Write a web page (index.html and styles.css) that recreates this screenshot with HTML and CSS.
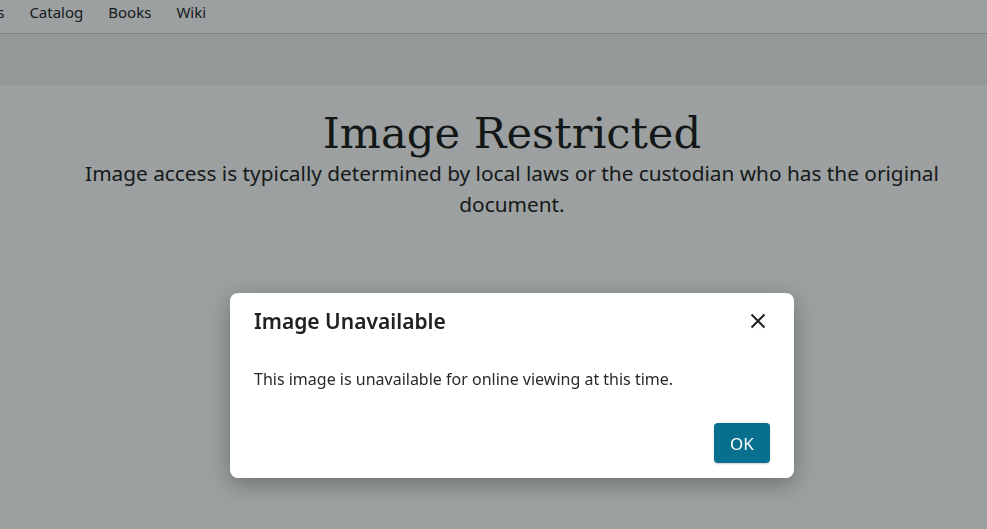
FILE: index.html
```html
<!doctype html>
<html lang="en">
<head>
    <meta charset="UTF-8">
    <meta name="viewport" content="width=device-width, initial-scale=1.0">
    <title>Image Restricted</title>
    <link rel="stylesheet" href="styles.css">
</head>
<body>
<div class="page">
    <div class="topnav">
        <ul>
            <li>Records</li>
            <li>Catalog</li>
            <li>Books</li>
            <li>Wiki</li>
        </ul>
    </div>
    <div class="toolbar"></div>
    <div class="restricted">
        <h1>Image Restricted</h1>
        <p>Image access is typically determined by local laws or the custodian who has the original document.</p>
    </div>
</div>

<!-- 弹窗 -->
<div class="backdrop">
    <div class="modal">
        <div class="modal_head">
            <h2>Image Unavailable</h2>
            <span class="close">
                <svg width="16" height="16" viewBox="0 0 16 16">
                    <path d="M1.5 1.5 L14.5 14.5 M14.5 1.5 L1.5 14.5" stroke="#222" stroke-width="2" fill="none"/>
                </svg>
            </span>
        </div>
        <div class="modal_body">This image is unavailable for online viewing at this time.</div>
        <div class="modal_foot">
            <button class="btn_ok">OK</button>
        </div>
    </div>
</div>
</body>
</html>
```

FILE: styles.css
```css
* {
    margin: 0;
    padding: 0;
    box-sizing: border-box;
}

html, body {
    overflow: hidden;
    height: 100%;
}

body {
    background: #fff;
    font-family: "Noto Sans", "Open Sans", sans-serif;
    color: #212529;
}

.page {
    width: 1024px;
}

.topnav {
    height: 34px;
    border-bottom: 1px solid #cdcdcd;
}

.topnav ul {
    list-style: none;
    display: flex;
    gap: 25px;
    margin-left: -52px;
    font-size: 15px;
    line-height: 25px;
}

.toolbar {
    height: 51px;
    background: #f2f3f3;
}

.restricted {
    text-align: center;
    padding: 23px 60px 0;
}

.restricted h1 {
    font-family: "DejaVu Serif", serif;
    font-weight: normal;
    font-size: 43.3px;
    line-height: 50px;
    color: #1c1c1c;
}

.restricted p {
    font-size: 20.8px;
    line-height: 31px;
    color: #222;
}

.backdrop {
    position: fixed;
    left: 0;
    top: 0;
    width: 1024px;
    height: 100%;
    background: rgba(8, 18, 18, 0.4);
    display: flex;
    justify-content: center;
    align-items: flex-start;
    padding-top: 293px;
}

.modal {
    width: 564px;
    background: #fff;
    border-radius: 8px;
    box-shadow: 0 6px 22px rgba(0, 0, 0, 0.3);
}

.modal_head {
    display: flex;
    justify-content: space-between;
    align-items: center;
    padding: 16px 28px 16px 24px;
}

.modal_head h2 {
    font-size: 21px;
    font-weight: 600;
    line-height: 24px;
    color: #212121;
}

.close {
    display: flex;
    width: 16px;
    height: 16px;
}

.modal_body {
    padding: 18px 24px;
    font-size: 16px;
    line-height: 24px;
    color: #2a2a2a;
}

.modal_foot {
    display: flex;
    justify-content: flex-end;
    padding: 14px 24px 15px;
}

.btn_ok {
    width: 56px;
    height: 40px;
    border: none;
    border-radius: 4px;
    background: #086f8f;
    color: #fff;
    font-family: "Noto Sans", sans-serif;
    font-size: 17px;
    box-shadow: 0 1px 2px rgba(0, 0, 0, 0.2);
}
```
